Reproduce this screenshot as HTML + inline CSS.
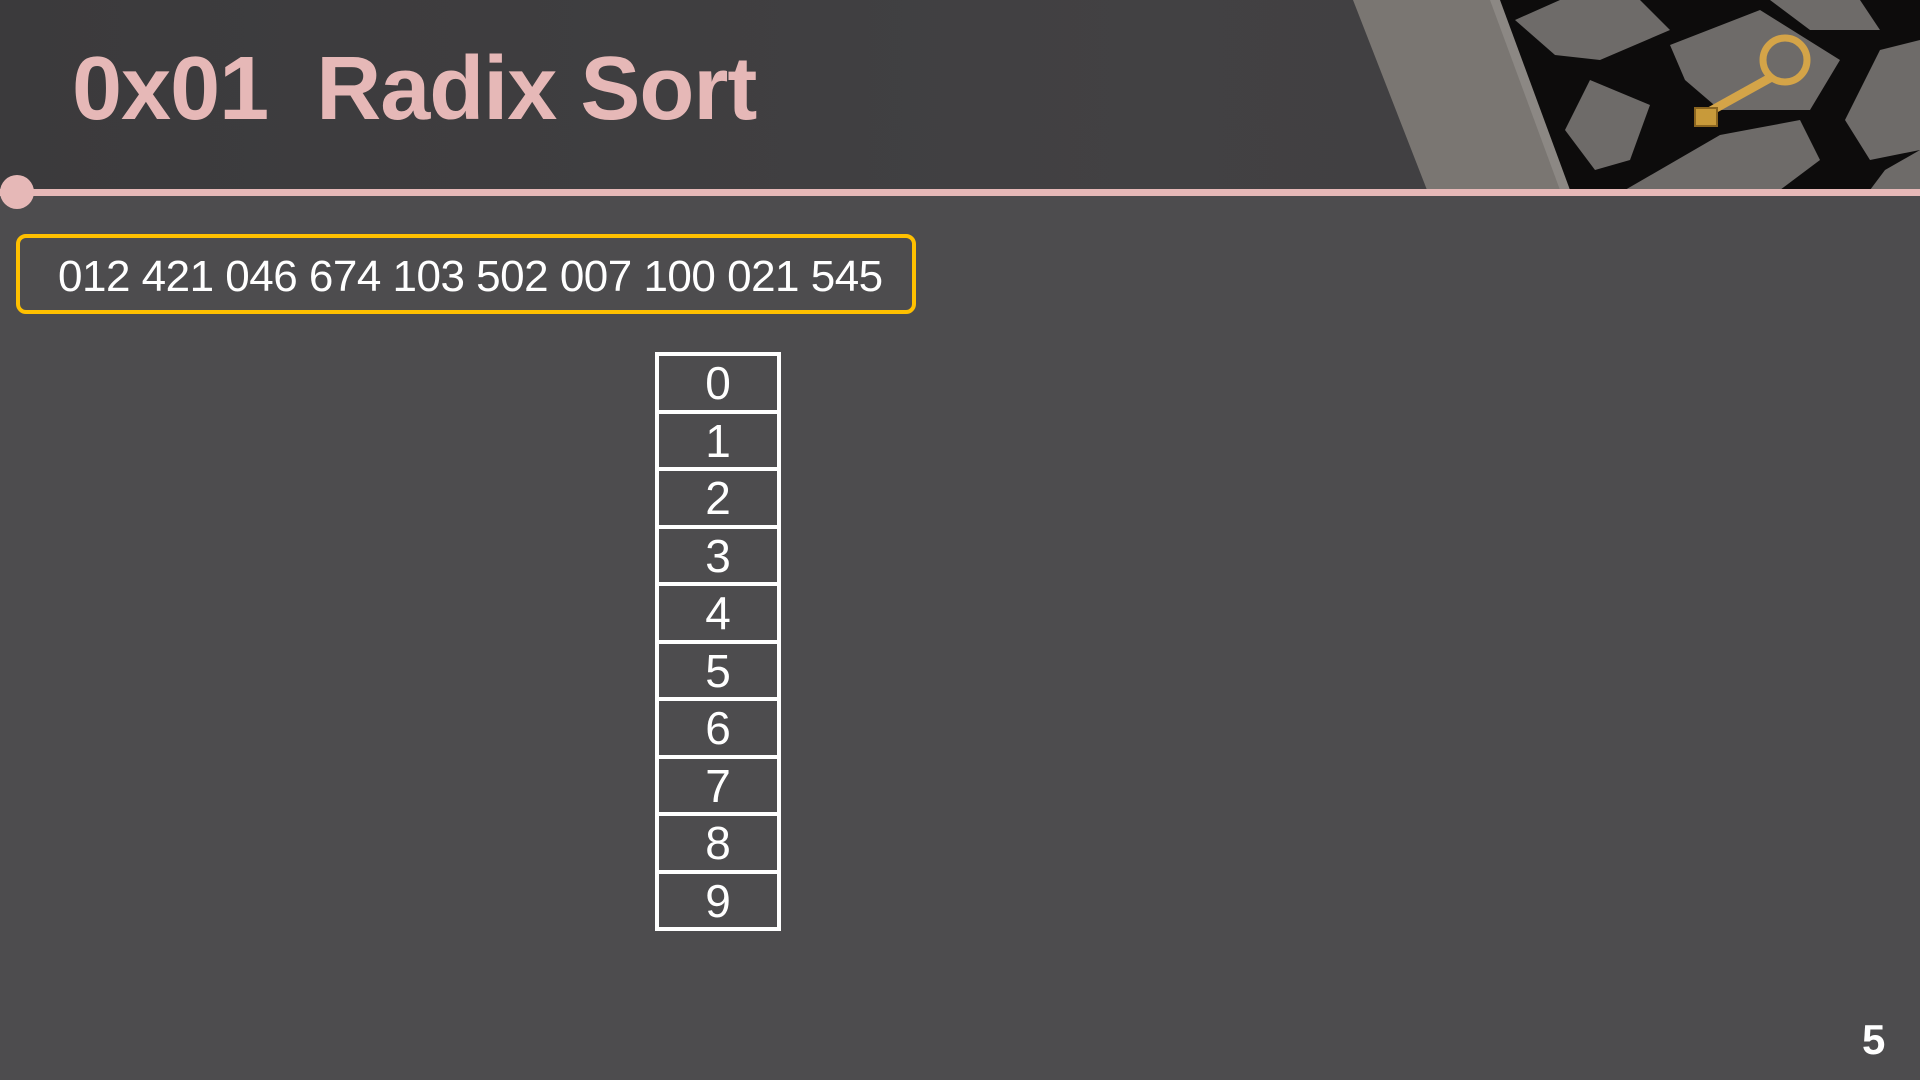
<!DOCTYPE html>
<html><head><meta charset="utf-8"><style>
html,body{margin:0;padding:0}
body{width:1920px;height:1080px;background:#4d4c4e;position:relative;overflow:hidden;font-family:"Liberation Sans","DejaVu Sans",sans-serif}
.hdr{position:absolute;left:0;top:0;width:1920px;height:190px;background:linear-gradient(90deg,#3b3a3c,#424143 60%,#3f3e40)}
.line{position:absolute;left:0;top:189px;width:1920px;height:7px;background:#e6b8b7}
.dot{position:absolute;left:0;top:175px;width:34px;height:34px;border-radius:50%;background:#e6b8b7}
.title{position:absolute;left:72px;top:38px;font-size:90px;font-weight:bold;color:#e6b8b7;white-space:pre;letter-spacing:-1px}
.box{position:absolute;left:16px;top:234px;width:892px;height:72px;border:4px solid #ffc000;border-radius:10px}
.box span{position:absolute;left:38px;top:14px;font-size:44px;color:#fff;white-space:nowrap;letter-spacing:-0.5px}
.tbl{position:absolute;left:655px;top:352px;width:118px;border:4px solid #fff;border-bottom:none}
.tbl div{height:53.5px;border-bottom:4px solid #fff;color:#fff;font-size:46px;text-align:center;line-height:54px}
.pg{position:absolute;left:1862px;top:1016px;font-size:42px;font-weight:bold;color:#fff}
</style></head><body>
<div class="hdr"></div>
<svg style="position:absolute;left:1340px;top:0" width="580" height="190" viewBox="0 0 580 190">
<polygon points="13,0 580,0 580,190 87,190" fill="#7a7672"/>
<polygon points="150,0 580,0 580,190 220,190" fill="#8c8884"/>
<polygon points="160,0 580,0 580,190 230,190" fill="#0d0c0c"/>
<g fill="#6e6b69">
<polygon points="175,20 220,0 300,0 330,30 260,60 215,55"/>
<polygon points="250,80 310,105 290,160 255,170 225,130"/>
<polygon points="330,45 420,10 500,60 470,110 380,110 345,80"/>
<polygon points="430,0 520,0 540,30 470,30"/>
<polygon points="540,50 580,40 580,150 530,160 505,120"/>
<polygon points="285,190 380,135 460,120 480,160 440,190"/>
<polygon points="545,170 580,150 580,190 530,190"/>
</g>
<g fill="#c89a3a" stroke="#8a6520" stroke-width="2">
<circle cx="445" cy="60" r="22" fill="none" stroke="#d4a448" stroke-width="7"/>
<line x1="430" y1="78" x2="358" y2="118" stroke="#d4a448" stroke-width="9"/>
<rect x="355" y="108" width="22" height="18" fill="#c89a3a"/>
</g>
</svg>
<div class="line"></div>
<div class="dot"></div>
<div class="title">0x01  Radix Sort</div>
<div class="box"><span>012 421 046 674 103 502 007 100 021 545</span></div>
<div class="tbl"><div>0</div><div>1</div><div>2</div><div>3</div><div>4</div><div>5</div><div>6</div><div>7</div><div>8</div><div>9</div></div>
<div class="pg">5</div>
</body></html>
